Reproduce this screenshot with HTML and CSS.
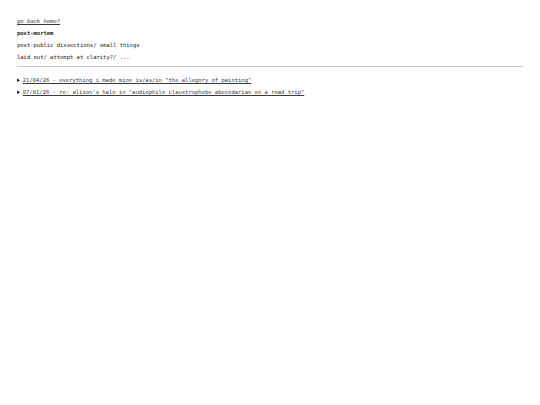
FILE: index.html
```html
<!DOCTYPE html>
<html>
<head>
<meta charset="utf-8">
<link rel="stylesheet" href="styles.css">
</head>
<body>
<main class="page">
  <p class="line"><a class="home" href="#">go back home?</a></p>
  <p class="line title">post-mortem</p>
  <p class="line">post-public dissections/ small things</p>
  <p class="line">laid out/ attempt at clarity?/ ...</p>
  <hr class="rule">
  <div class="posts">
    <details class="post"><summary><a href="#">21/04/26 - everything i made mine is/as/in "the allegory of painting"</a></summary></details>
    <details class="post"><summary><a href="#">07/01/26 - re: alison's halo in "audiophile claustrophobe abecedarian on a road trip"</a></summary></details>
  </div>
</main>
</body>
</html>
```
FILE: styles.css
```css
html, body {
  margin: 0;
  padding: 0;
  background: #fff;
}
.page {
  padding: 15px 17px;
  font-family: "DejaVu Sans Mono", "Liberation Mono", monospace;
  font-size: 5.5px;
  color: #222;
}
.line {
  margin: 0;
  line-height: 12px;
}
.title {
  font-weight: bold;
}
a {
  color: #3a3a3a;
  text-decoration: underline;
}
.home {
  font-style: italic;
}
.rule {
  border: 0;
  border-top: 1px solid #c8c8c8;
  margin: 3px 0 7px;
  height: 0;
}
.post summary {
  line-height: 12px;
  cursor: pointer;
}
```
